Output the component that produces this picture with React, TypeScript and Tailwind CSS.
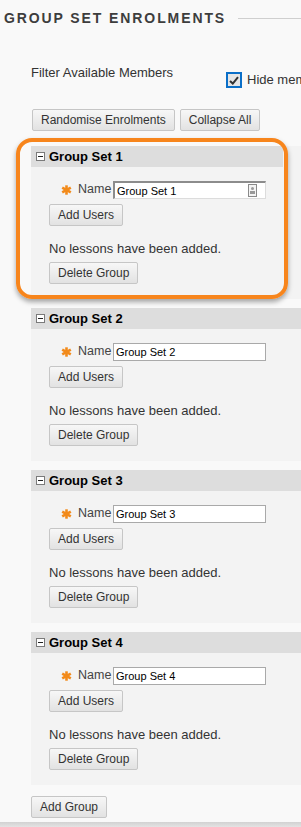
import React from "react";

function Btn({ label, className = "" }: { label: string; className?: string }) {
  return (
    <button
      type="button"
      className={
        "h-[22px] px-[8px] border border-[#c6c6c6] rounded-[2px] bg-gradient-to-b from-[#f7f7f7] to-[#e2e2e2] text-[12px] leading-[20px] text-[#333] whitespace-nowrap " +
        className
      }
    >
      {label}
    </button>
  );
}

function Asterisk() {
  return (
    <svg width="11" height="10" viewBox="0 0 11 10">
      <g stroke="#f28a1a" strokeWidth="2.6" strokeLinecap="butt">
        <line x1="5.5" y1="0.3" x2="5.5" y2="9.7" />
        <line x1="1.2" y1="2.6" x2="9.8" y2="7.4" />
        <line x1="1.2" y1="7.4" x2="9.8" y2="2.6" />
      </g>
    </svg>
  );
}

function Section({ n, first }: { n: number; first?: boolean }) {
  return (
    <div className="ml-[31px] mb-[9px] bg-[#f3f3f3] pb-[15px]">
      <div className={"h-[21px] bg-[#dddddd] flex items-center pl-[5px] " + (first ? "mr-[18px]" : "")}>
        <div className="w-[9px] h-[9px] border border-[#7a7a7a] bg-white flex items-center justify-center shrink-0">
          <div className="w-[5px] h-px bg-[#222]" />
        </div>
        <span className="ml-[4px] text-[13px] leading-[16px] font-bold text-black">Group Set {n}</span>
      </div>
      <div className="pl-[18px]">
        <div className="mt-[14px] h-[18px] flex items-center">
          <div className="ml-[12px] w-[17px] h-[18px] flex items-start pt-[4px] shrink-0">
            <Asterisk />
          </div>
          <span className="w-[35px] shrink-0 text-[12.5px] leading-[16px] text-[#444] -mt-[3px]">Name</span>
          <div
            className={
              "w-[153px] h-[18px] shrink-0 bg-white flex items-center relative " +
              (first
                ? "border-t-2 border-l-2 border-[#8c8c8c] border-r border-b border-r-[#dcdcdc] border-b-[#dcdcdc]"
                : "border border-[#a9a9a9]")
            }
          >
            <span className="pl-[2px] text-[11px] leading-[14px] text-black">Group Set {n}</span>
            {first && (
              <div className="absolute right-[8px] top-[1px] w-[9px] h-[13px] border border-[#8a8a8a] bg-[#f4f4f4] flex flex-col items-center justify-center gap-[1px]">
                <div className="w-[3px] h-[3px] rounded-full bg-[#999]" />
                <div className="w-[5px] h-[3px] bg-[#999]" />
              </div>
            )}
          </div>
        </div>
        <Btn label="Add Users" className="mt-[5px] block" />
        <div className="mt-[15px] text-[13px] leading-[16px] text-[#333]">No lessons have been added.</div>
        <Btn label="Delete Group" className="mt-[5px] block" />
      </div>
    </div>
  );
}

export default function App() {
  return (
    <div className="relative w-[301px] h-[827px] overflow-hidden bg-[#f9f9f9] font-['Liberation_Sans',Arial,sans-serif]">
      <div className="flex items-center pt-[10px] pl-[4px]">
        <span className="shrink-0 text-[14px] leading-[16px] font-bold tracking-[1.9px] text-[#3d3d3d] whitespace-nowrap">
          GROUP SET ENROLMENTS
        </span>
        <div className="flex-1 ml-[12px] h-px bg-[#cfcfcf]" />
      </div>

      <div className="mt-[39px] pl-[31px] flex items-start h-[23px]">
        <span className="w-[195px] shrink-0 text-[13px] leading-[16px] text-[#333] whitespace-nowrap">Filter Available Members</span>
        <div className="mt-[7px] flex items-center whitespace-nowrap shrink-0">
          <div className="w-[16px] h-[16px] border-2 border-[#0b6fc8] bg-[#e6e6e6] flex items-center justify-center shrink-0">
            <svg width="10" height="9" viewBox="0 0 10 9">
              <path d="M1 5 L3.8 7.6 L9 1.2" stroke="#333" strokeWidth="2" fill="none" />
            </svg>
          </div>
          <span className="ml-[5px] text-[13px] leading-[16px] text-[#333]">Hide members</span>
        </div>
      </div>

      <div className="mt-[21px] pl-[32px] flex gap-[5px]">
        <Btn label="Randomise Enrolments" />
        <Btn label="Collapse All" />
      </div>

      <div className="mt-[15px]">
        <Section n={1} first />
        <Section n={2} />
        <Section n={3} />
        <Section n={4} />
      </div>

      <div className="pl-[31px]">
        <Btn label="Add Group" />
      </div>

      <div className="mt-[4px] h-[8px] bg-gradient-to-b from-[#d2d2d2] to-[#eeeeee]" />

      <div className="absolute left-[16px] top-[138px] w-[272px] h-[161px] border-[4px] border-[#f7851c] rounded-[16px] shadow-[0_3px_5px_rgba(0,0,0,0.35)] pointer-events-none" />
    </div>
  );
}
